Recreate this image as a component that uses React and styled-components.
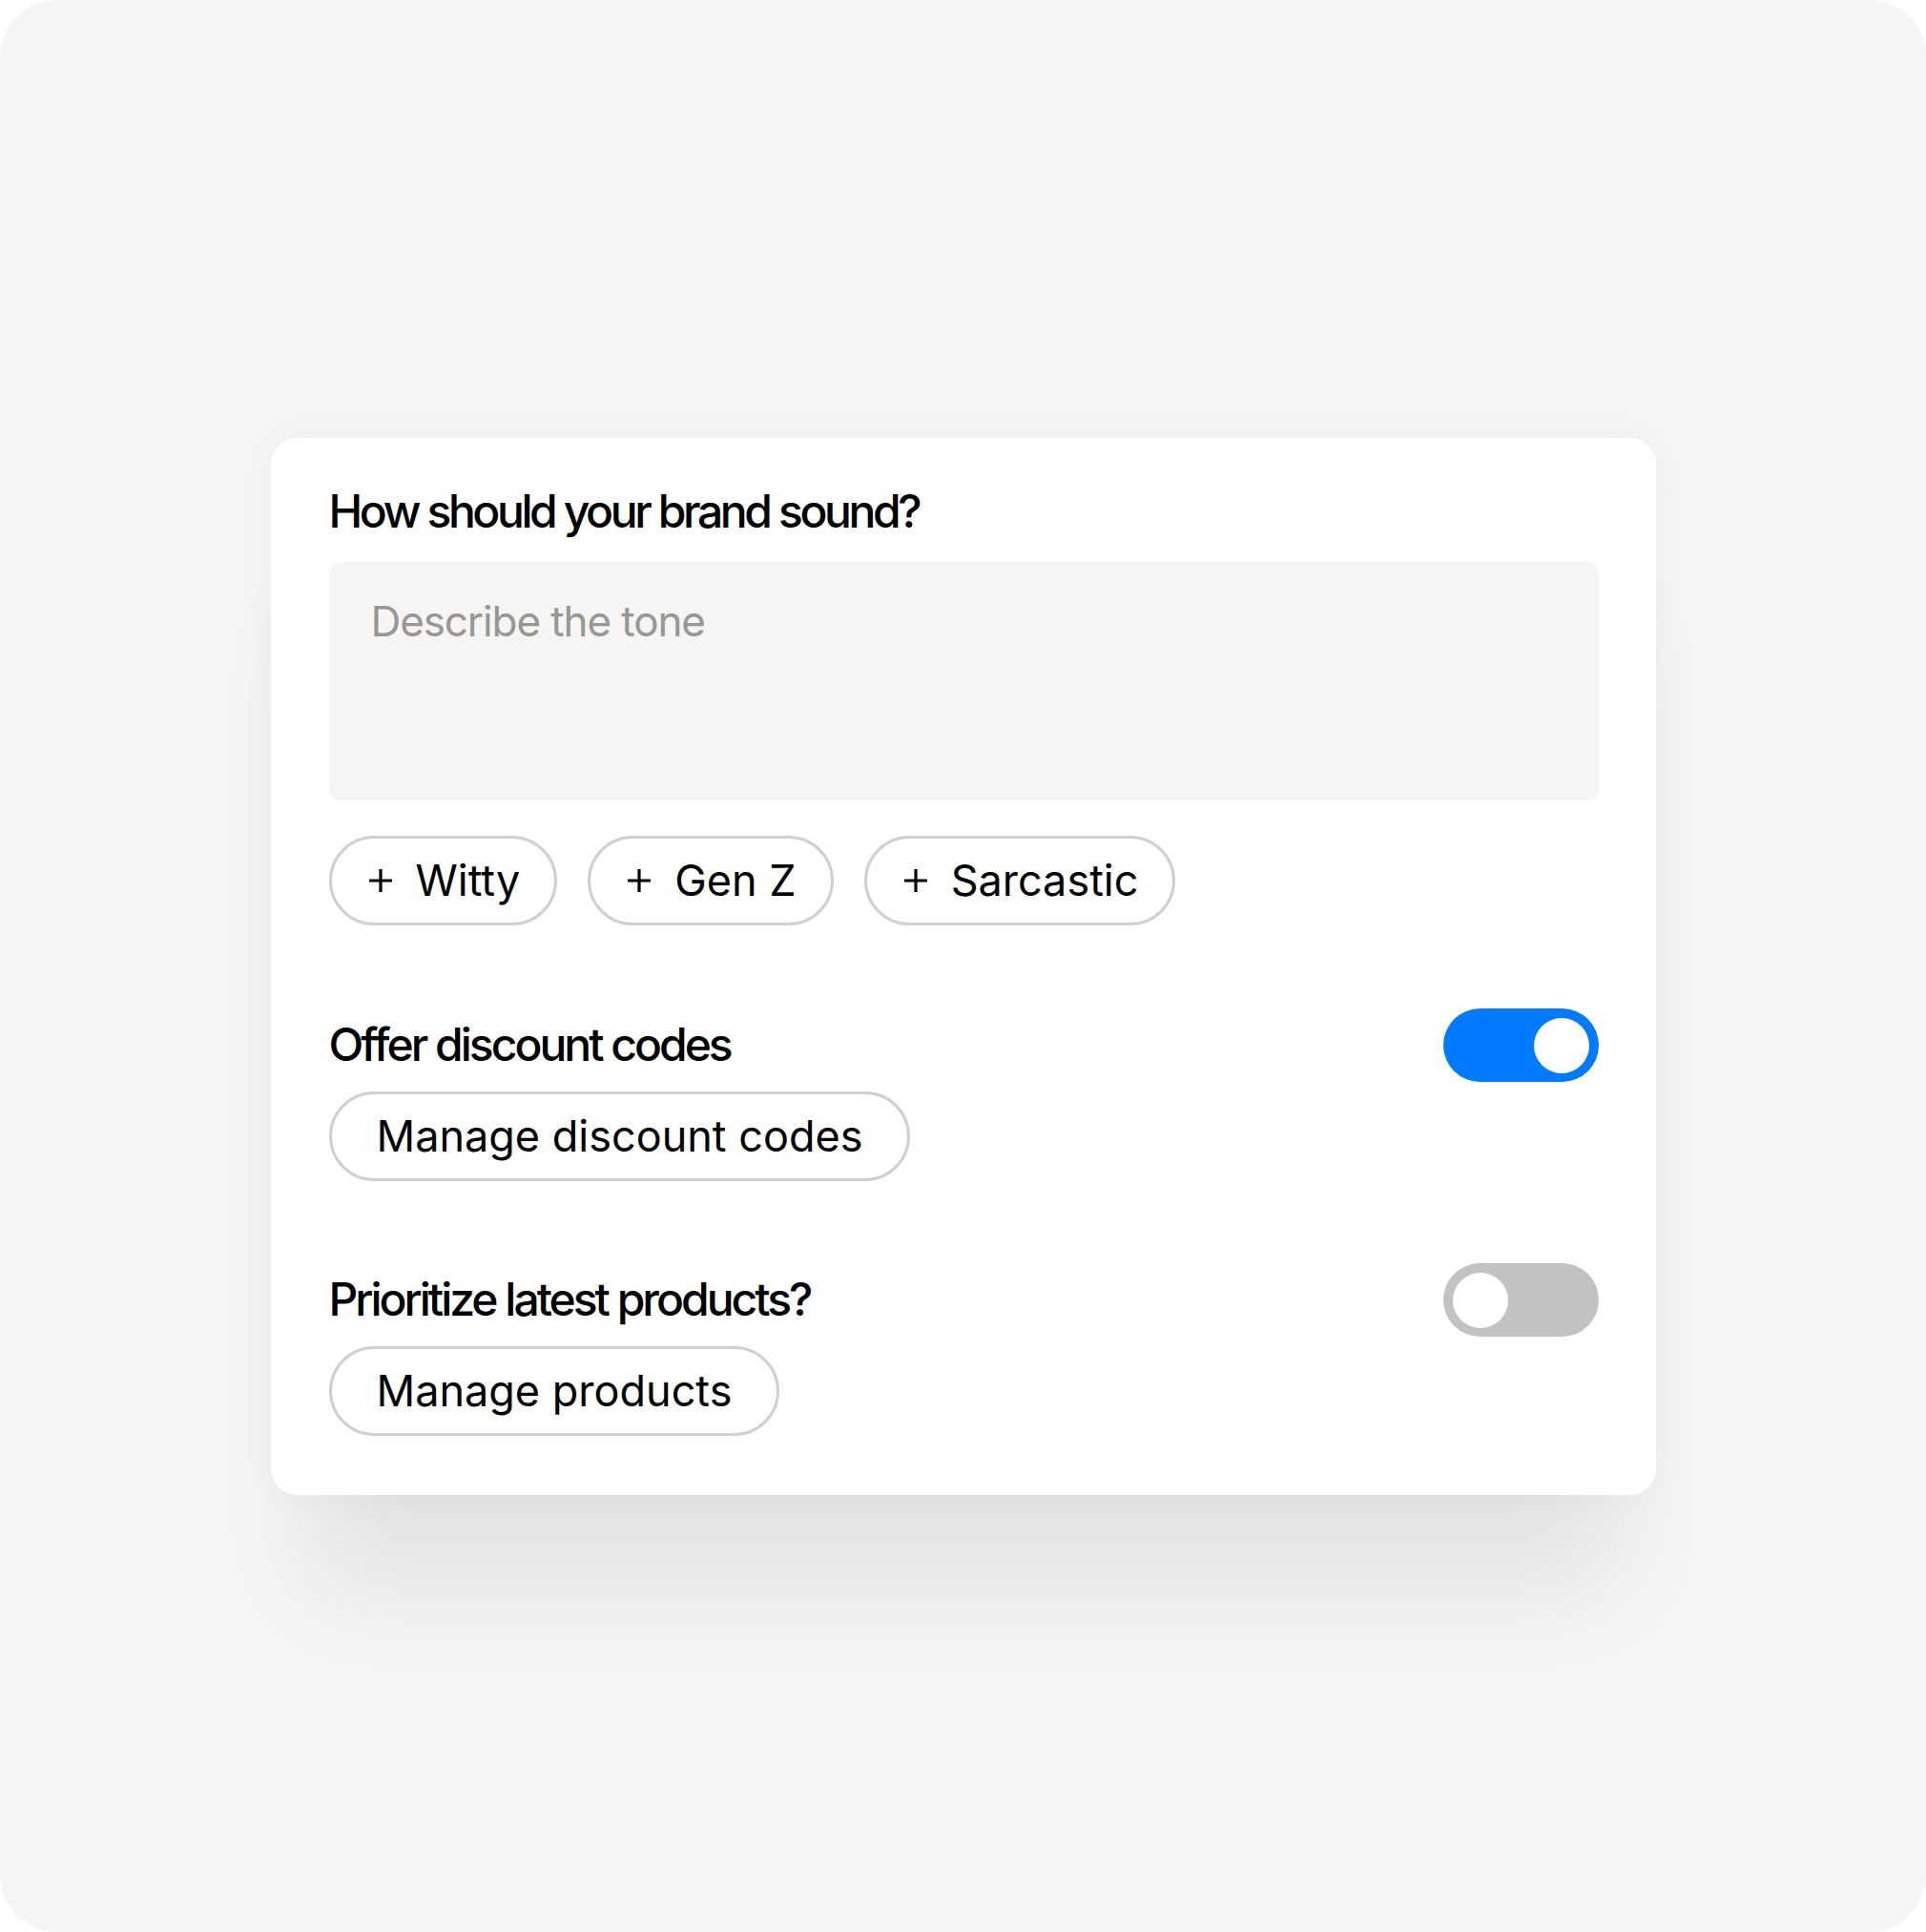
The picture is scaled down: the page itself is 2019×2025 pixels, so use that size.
import React from "react";
import styled, { createGlobalStyle } from "styled-components";

const GlobalStyle = createGlobalStyle`
  html, body {
    margin: 0;
    padding: 0;
    background: #ffffff;
  }
  body {
    font-family: Inter, "Noto Sans", sans-serif;
    color: #000;
    -webkit-font-smoothing: antialiased;
  }
  * {
    box-sizing: border-box;
  }
`;

const Stage = styled.div`
  width: 100vw;
  height: 100vh;
  background: #f6f5f3;
  border-radius: 60px;
  display: flex;
  align-items: center;
  justify-content: center;
  overflow: hidden;
`;

const Card = styled.div`
  width: 1452px;
  background: #ffffff;
  border-radius: 28px;
  padding: 48px 60px 62px 61px;
  display: flex;
  flex-direction: column;
  box-shadow: 0 0 40px rgba(0, 0, 0, 0.035),
    0 140px 100px -40px rgba(0, 0, 0, 0.07);
`;

const Heading = styled.h2`
  margin: 0;
  font-size: 48px;
  line-height: 58px;
  font-weight: 500;
  letter-spacing: -3.4px;
`;

const ToneInput = styled.textarea`
  display: block;
  margin-top: 24px;
  width: 100%;
  height: 250px;
  resize: none;
  border: none;
  outline: none;
  border-radius: 12px;
  background: #f6f5f3;
  padding: 36px 44px;
  font-family: Inter, sans-serif;
  font-size: 44px;
  line-height: 53px;
  letter-spacing: -1.1px;
  color: #000;

  &::placeholder {
    color: #979795;
  }
`;

const ChipRow = styled.div`
  display: flex;
  gap: 32px;
  margin-top: 37px;
`;

const Pill = styled.button`
  display: inline-flex;
  align-items: center;
  gap: ${props => (props.chip ? "24px" : "0")};
  height: 94px;
  padding: ${props => (props.chip ? "0 36px 0 38px" : "0 47px")};
  border: 3px solid #d0d0d0;
  border-radius: 999px;
  background: #ffffff;
  font-family: Inter, sans-serif;
  font-size: 45px;
  font-weight: 400;
  line-height: 55px;
  color: #000;
  cursor: pointer;
`;

const PlusIcon = styled.svg`
  width: 26px;
  height: 26px;
  flex: none;
`;

function Plus() {
  return (
    <PlusIcon viewBox="0 0 26 26" aria-hidden="true">
      <path
        d="M13 1v24M1 13h24"
        stroke="#000"
        strokeWidth="3.2"
        fill="none"
      />
    </PlusIcon>
  );
}

const Section = styled.div`
  display: flex;
  flex-direction: column;
  align-items: flex-start;
  gap: 10px;
  margin-top: ${props => props.top}px;
`;

const SettingRow = styled.div`
  width: 100%;
  display: flex;
  align-items: center;
  justify-content: space-between;
`;

const Label = styled.span`
  font-size: 48px;
  line-height: 58px;
  font-weight: 500;
  letter-spacing: -3px;
`;

const Track = styled.div`
  position: relative;
  width: 163px;
  height: 77px;
  border-radius: 999px;
  background: ${props => (props.on ? "#007aff" : "#c2c2c2")};
  cursor: pointer;
`;

const Knob = styled.div`
  position: absolute;
  top: 10px;
  left: ${props => (props.on ? "95px" : "10px")};
  width: 58px;
  height: 58px;
  border-radius: 50%;
  background: #ffffff;
`;

function Toggle({ on }) {
  return (
    <Track on={on ? 1 : 0}>
      <Knob on={on ? 1 : 0} />
    </Track>
  );
}

const tones = ["Witty", "Gen Z", "Sarcastic"];

export default function App() {
  return (
    <>
      <GlobalStyle />
      <Stage>
        <Card>
          <Heading>How should your brand sound?</Heading>
          <ToneInput placeholder="Describe the tone" />
          <ChipRow>
            {tones.map(t => (
              <Pill chip key={t}>
                <Plus />
                {t}
              </Pill>
            ))}
          </ChipRow>

          <Section top={87}>
            <SettingRow>
              <Label>Offer discount codes</Label>
              <Toggle on />
            </SettingRow>
            <Pill>Manage discount codes</Pill>
          </Section>

          <Section top={86}>
            <SettingRow>
              <Label>Prioritize latest products?</Label>
              <Toggle />
            </SettingRow>
            <Pill>Manage products</Pill>
          </Section>
        </Card>
      </Stage>
    </>
  );
}
